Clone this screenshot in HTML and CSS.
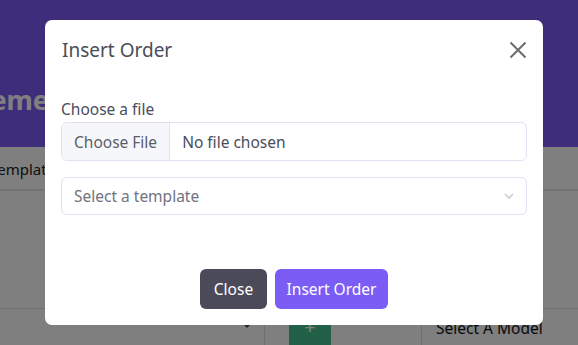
FILE: index.html
```html
<!DOCTYPE html>
<html>
<head>
<meta charset="utf-8">
<link rel="stylesheet" href="styles.css">
</head>
<body>
<div class="page">
  <header class="hero"><h1 class="hero-title">Agreements</h1></header>
  <div class="tabs"><span class="tab">Templates</span></div>
  <div class="area"></div>
  <div class="toolbar">
    <div class="tb-select"><span class="caret"></span></div>
    <div class="tb-add"><span class="add-btn">+</span></div>
    <div class="tb-model">Select A Model</div>
  </div>
</div>
<div class="backdrop"></div>
<div class="modal">
  <div class="modal-head">
    <h2 class="modal-title">Insert Order</h2>
    <svg class="close-x" width="18" height="18" viewBox="0 0 18 18"><path d="M1.5 1.5 L16.5 16.5 M16.5 1.5 L1.5 16.5" stroke="#6c6c70" stroke-width="2" fill="none"/></svg>
  </div>
  <div class="modal-body">
    <label class="label">Choose a file</label>
    <div class="file">
      <span class="file-btn">Choose File</span>
      <span class="file-name">No file chosen</span>
    </div>
    <div class="select">
      <span class="select-text">Select a template</span>
      <svg width="10" height="7" viewBox="0 0 10 7"><path d="M1 1 L5 5 L9 1" stroke="#c9ccd6" stroke-width="1.6" fill="none"/></svg>
    </div>
  </div>
  <div class="modal-foot">
    <button class="btn btn-dark">Close</button>
    <button class="btn btn-primary">Insert Order</button>
  </div>
</div>
</body>
</html>
```
FILE: styles.css
```css
* { box-sizing: border-box; }
html, body { margin: 0; padding: 0; }
body {
  font-family: "Noto Sans", "Open Sans", sans-serif;
  background: #fff;
  width: 578px;
  height: 345px;
  overflow: hidden;
  position: relative;
}
.page { width: 578px; }
.hero {
  height: 147px;
  background: #7c5af4;
  padding: 82px 0 0 0;
  overflow: hidden;
}
.hero-title {
  margin: 0 0 0 -73px;
  font-size: 27px;
  font-weight: 700;
  color: #fff;
  line-height: 36px;
  white-space: nowrap;
}
.tabs {
  height: 44px;
  border-bottom: 2px solid #e6e6e6;
  padding: 12px 0 0 0;
  font-size: 15px;
  color: #222;
}
.tab { margin-left: -10px; }
.area {
  height: 118px;
  border-bottom: 1px solid #dcdcdc;
}
.toolbar {
  display: flex;
  height: 40px;
}
.tb-select {
  width: 265px;
  border-right: 1px solid #dcdcdc;
  position: relative;
}
.caret {
  position: absolute;
  left: 242px;
  top: 14px;
  border-left: 5px solid transparent;
  border-right: 5px solid transparent;
  border-top: 5px solid #555;
}
.tb-add {
  width: 157px;
  border-right: 1px solid #dcdcdc;
  padding: 11px 0 0 24px;
}
.add-btn {
  display: block;
  width: 42px;
  height: 30px;
  background: #45c38e;
  border-radius: 3px;
  color: #fff;
  text-align: center;
  font-size: 20px;
  line-height: 14px;
}
.tb-model {
  padding: 8px 0 0 14px;
  font-size: 15.5px;
  color: #111;
}
.backdrop {
  position: absolute;
  inset: 0;
  background: rgba(0,0,0,0.5);
}
.modal {
  position: absolute;
  left: 45px;
  top: 20px;
  width: 498px;
  height: 305px;
  background: #fff;
  border-radius: 7px;
  display: flex;
  flex-direction: column;
}
.modal-head {
  display: flex;
  justify-content: space-between;
  align-items: flex-start;
  padding: 16px 16px 0 17px;
  height: 61px;
}
.modal-title {
  margin: 0;
  font-size: 19px;
  font-weight: 400;
  color: #4a4d5a;
  line-height: 28px;
}
.close-x { margin-top: 5px; }
.modal-body {
  padding: 18px 16px 0 16px;
}
.label {
  display: block;
  font-size: 15.5px;
  color: #4a4d5a;
  line-height: 20px;
  margin-bottom: 3px;
}
.file {
  display: flex;
  height: 39px;
  border: 1px solid #e3e1f0;
  border-radius: 6px;
  overflow: hidden;
  font-size: 15.5px;
  color: #4a4d5a;
}
.file-btn {
  background: #f6f7fa;
  border-right: 1px solid #e3e1f0;
  padding: 0 12px;
  display: flex;
  align-items: center;
  color: #5b5e6a;
}
.file-name {
  display: flex;
  align-items: center;
  padding-left: 12px;
}
.select {
  margin-top: 16px;
  height: 38px;
  border: 1px solid #e3e1f0;
  border-radius: 6px;
  display: flex;
  align-items: center;
  justify-content: space-between;
  padding: 0 12px 0 12px;
  font-size: 15.5px;
  color: #70737e;
}
.modal-foot {
  margin-top: auto;
  display: flex;
  justify-content: center;
  gap: 8px;
  padding-bottom: 16px;
}
.btn {
  border: 0;
  height: 40px;
  border-radius: 6px;
  font-family: inherit;
  font-size: 15.5px;
  color: #fff;
  padding: 0;
}
.btn-dark { background: #4b4a59; width: 67px; }
.btn-primary { background: #7b5cf5; width: 113px; }
```
